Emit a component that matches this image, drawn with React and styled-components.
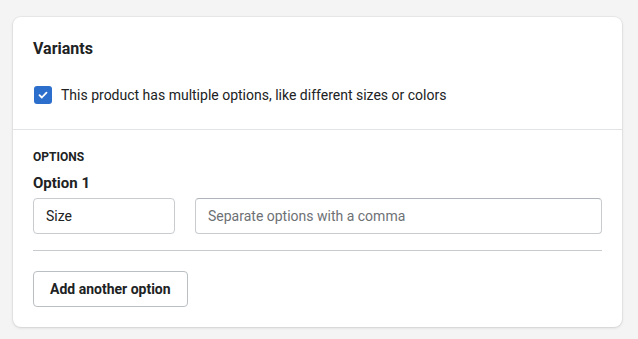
import styled, { createGlobalStyle } from "styled-components";

const Global = createGlobalStyle`
  html, body {
    margin: 0;
    padding: 0;
    background: #f4f4f4;
    font-family: Roboto, "Liberation Sans", sans-serif;
    color: #202223;
  }
  * { box-sizing: border-box; }
`;

const Page = styled.div`
  padding: 17px 16px 12px 13px;
`;

const Card = styled.div`
  background: #ffffff;
  border-radius: 8px;
  box-shadow: 0 0 0 1px rgba(63, 63, 68, 0.05), 0 1px 3px rgba(63, 63, 68, 0.15);
`;

const Section = styled.div`
  padding: 20px 20px ${(p) => p.$bottom || "20px"};
  & + & {
    border-top: 1px solid #e1e3e5;
  }
`;

const Title = styled.h2`
  margin: 0 0 24px;
  font-size: 16px;
  line-height: 24px;
  font-weight: 700;
`;

const CheckRow = styled.label`
  display: flex;
  align-items: center;
  gap: 9px;
  padding-left: 1px;
  font-size: 14px;
  line-height: 20px;
`;

const Box = styled.span`
  width: 18px;
  height: 18px;
  border-radius: 3px;
  background: #2c6ecb;
  display: flex;
  align-items: center;
  justify-content: center;
`;

const Caps = styled.div`
  font-size: 12px;
  line-height: 16px;
  font-weight: 700;
  text-transform: uppercase;
  margin: -1px 0 8px;
`;

const Label = styled.div`
  font-size: 15px;
  line-height: 20px;
  font-weight: 700;
  margin-bottom: 5px;
`;

const Fields = styled.div`
  display: flex;
  gap: 20px;
`;

const Input = styled.input`
  width: ${(p) => p.$w || "auto"};
  flex: ${(p) => (p.$w ? "none" : "1")};
  height: 36px;
  padding: 0 12px;
  border: 1px solid #c9cccf;
  border-top-color: ${(p) => (p.$dark ? "#aeb4b9" : "#c9cccf")};
  border-radius: 4px;
  font: inherit;
  font-size: 14px;
  color: #202223;
  background: #fff;
  outline: none;
  &::placeholder {
    color: #6d7175;
  }
`;

const Rule = styled.hr`
  border: 0;
  border-top: 1px solid #c9cccf;
  margin: 16px 0 20px;
`;

const Button = styled.button`
  height: 36px;
  padding: 0 16px;
  border: 1px solid #babfc3;
  border-radius: 4px;
  background: #fff;
  font: inherit;
  font-size: 14px;
  font-weight: 700;
  color: #202223;
`;

export default function App() {
  return (
    <>
      <Global />
      <Page>
        <Card>
          <Section $bottom="24px">
            <Title>Variants</Title>
            <CheckRow>
              <Box>
                <svg width="12" height="12" viewBox="0 0 12 12">
                  <path d="M2.5 6.2l2.3 2.3 4.7-4.9" fill="none" stroke="#fff" strokeWidth="1.8" strokeLinecap="round" strokeLinejoin="round" />
                </svg>
              </Box>
              This product has multiple options, like different sizes or colors
            </CheckRow>
          </Section>
          <Section $bottom="20px">
            <Caps>Options</Caps>
            <Label>Option 1</Label>
            <Fields>
              <Input $w="142px" defaultValue="Size" />
              <Input $dark placeholder="Separate options with a comma" />
            </Fields>
            <Rule />
            <Button>Add another option</Button>
          </Section>
        </Card>
      </Page>
    </>
  );
}
